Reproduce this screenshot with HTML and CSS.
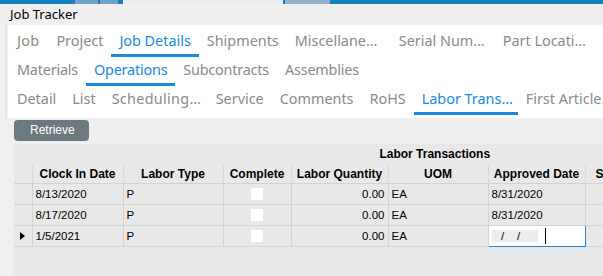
FILE: index.html
```html
<!DOCTYPE html>
<html lang="en">
<head>
    <meta charset="UTF-8">
    <title>Job Tracker</title>
    <link rel="stylesheet" href="styles.css">
</head>
<body>
    <!-- window chrome strip -->
    <div class="top-strip">
        <span class="chip chip-a"></span>
        <span class="chip chip-b"></span>
        <span class="chip chip-c"></span>
        <span class="chip chip-d"></span>
    </div>
    <div class="title-bar">Job Tracker</div>

    <div class="page">
        <div class="tab-panel">
            <div class="tab-row main-row">
                <span class="tab">Job</span>
                <span class="tab">Project</span>
                <span class="tab active">Job Details</span>
                <span class="tab">Shipments</span>
                <span class="tab trunc">Miscellane…</span>
                <span class="tab trunc">Serial Num…</span>
                <span class="tab trunc">Part Locati…</span>
            </div>
            <div class="tab-row tight">
                <span class="tab">Materials</span>
                <span class="tab active">Operations</span>
                <span class="tab">Subcontracts</span>
                <span class="tab">Assemblies</span>
            </div>
            <div class="tab-row">
                <span class="tab">Detail</span>
                <span class="tab">List</span>
                <span class="tab trunc spaced">Scheduling…</span>
                <span class="tab">Service</span>
                <span class="tab">Comments</span>
                <span class="tab">RoHS</span>
                <span class="tab trunc active">Labor Trans…</span>
                <span class="tab trunc">First Article…</span>
            </div>
        </div>

        <div class="lower">
            <div class="toolbar">
                <button class="retrieve-btn">Retrieve</button>
            </div>

            <div class="grid">
                <table class="labor-table">
                    <colgroup>
                        <col style="width:18px">
                        <col style="width:91px">
                        <col style="width:100px">
                        <col style="width:68px">
                        <col style="width:97px">
                        <col style="width:100px">
                        <col style="width:97px">
                        <col style="width:120px">
                        <col>
                    </colgroup>
                    <tr class="caption-row">
                        <td colspan="9">Labor Transactions</td>
                    </tr>
                    <tr class="head-row">
                        <th class="selector"></th>
                        <th>Clock In Date</th>
                        <th>Labor Type</th>
                        <th>Complete</th>
                        <th>Labor Quantity</th>
                        <th>UOM</th>
                        <th>Approved Date</th>
                        <th class="left">Status</th>
                        <th></th>
                    </tr>
                    <tr>
                        <td class="selector"></td>
                        <td>8/13/2020</td>
                        <td>P</td>
                        <td class="center"><span class="check"></span></td>
                        <td class="num">0.00</td>
                        <td>EA</td>
                        <td>8/31/2020</td>
                        <td></td>
                        <td></td>
                    </tr>
                    <tr>
                        <td class="selector"></td>
                        <td>8/17/2020</td>
                        <td>P</td>
                        <td class="center"><span class="check"></span></td>
                        <td class="num">0.00</td>
                        <td>EA</td>
                        <td>8/31/2020</td>
                        <td></td>
                        <td></td>
                    </tr>
                    <tr>
                        <td class="selector"><span class="row-arrow"></span></td>
                        <td>1/5/2021</td>
                        <td>P</td>
                        <td class="center"><span class="check"></span></td>
                        <td class="num">0.00</td>
                        <td>EA</td>
                        <td class="editing">
                            <span class="mask">&nbsp;&nbsp;&nbsp;/&nbsp;&nbsp;&nbsp;&nbsp;/</span><span class="caret"></span>
                        </td>
                        <td></td>
                        <td></td>
                    </tr>
                </table>
            </div>
        </div>
    </div>
</body>
</html>
```

FILE: styles.css
```css
body {
    margin: 0;
    overflow: hidden;
    font-family: "Liberation Sans", Arial, sans-serif;
    background-color: #f1f1f1;
    color: #000;
}

.top-strip {
    height: 4px;
    background-color: #1380c0;
    display: flex;
}
.chip {
    display: block;
    height: 4px;
}
.chip-a { margin-left: 75px; width: 23px; background-color: #6ea3c7; }
.chip-b { margin-left: 2px; width: 18px; background-color: #6ea3c7; }
.chip-c { margin-left: 5px; width: 160px; background-color: #e6eef3; }
.chip-d { margin-left: 2px; width: 45px; background-color: #8fb2c9; }

.title-bar {
    height: 21px;
    line-height: 21px;
    padding-left: 10px;
    background-color: #efefef;
    font-family: "Noto Sans", sans-serif;
    font-size: 13px;
}

.page {
    border-left: 2px solid #e6e6e6;
    margin-left: 5px;
    padding-left: 1px;
    background-color: #f1f1f1;
}

/* tab rows */
.tab-panel {
    background-color: #fff;
    height: 93px;
    padding-top: 3px;
    box-sizing: border-box;
}
.tab-row {
    display: flex;
    height: 29px;
    padding-left: 1px;
}
.tab {
    font-family: "Noto Sans", sans-serif;
    font-size: 14.4px;
    color: #8a8a8a;
    padding: 0 8px;
    height: 26px;
    line-height: 26px;
    white-space: nowrap;
    border-bottom: 3px solid transparent;
    flex-shrink: 0;
}
.main-row .tab:first-child {
    padding-right: 9px;
    letter-spacing: 0.3px;
}
.tight .tab {
    letter-spacing: -0.2px;
}
/* truncated labels get a fixed box */
.tab.trunc {
    width: 88px;
    overflow: hidden;
}
.tab.active {
    color: #1a8ae0;
    border-bottom-color: #1a8ae0;
}
.tab.spaced {
    letter-spacing: 0.3px;
}

/* lower grey area */
.lower {
    margin-left: -6px;
    padding-left: 6px;
    background-color: #efefef;
    height: 160px;
}
.toolbar {
    padding: 2px 0 3px 6px;
}
.retrieve-btn {
    font-family: "Liberation Sans", Arial, sans-serif;
    font-size: 12px;
    color: #fff;
    background-color: #6c7a80;
    border: none;
    border-radius: 4px;
    width: 75px;
    height: 21px;
    margin: 0;
    text-align: left;
    padding: 0 0 1px 16px;
}

.grid {
    margin-left: 6px;
    background-color: #e8e8e8;
    height: 140px;
    overflow: hidden;
}
.labor-table {
    border-collapse: collapse;
    table-layout: fixed;
    width: 842px;
    font-size: 11.5px;
}
.labor-table td,
.labor-table th {
    padding: 0 3px;
    white-space: nowrap;
    overflow: hidden;
}
.caption-row td {
    height: 20px;
    text-align: center;
    font-weight: bold;
    font-size: 12px;
    vertical-align: middle;
}
.head-row th {
    height: 19px;
    font-weight: bold;
    font-size: 12px;
    text-align: center;
    border-left: 1px solid #d9d9d9;
    border-bottom: 1px solid #d3d3d3;
}
.head-row th.selector {
    border-left: none;
}
.head-row th.left {
    text-align: left;
    padding-left: 10px;
}
.labor-table tr:not(.caption-row):not(.head-row) td {
    height: 20px;
    border: 1px solid #d3d3d3;
    vertical-align: middle;
}
.labor-table td.selector {
    border-left: none !important;
    padding: 0;
}
.num {
    text-align: right;
}
.center {
    text-align: center;
}
.check {
    display: inline-block;
    width: 12px;
    height: 12px;
    background-color: #fff;
    vertical-align: middle;
}
.row-arrow {
    display: block;
    width: 0;
    height: 0;
    margin-left: 6px;
    border-top: 4px solid transparent;
    border-bottom: 4px solid transparent;
    border-left: 5px solid #000;
}
.labor-table td.editing {
    background-color: #fff;
    border: 1px solid #1a85d6 !important;
    padding: 0 3px;
}
.mask {
    display: inline-block;
    width: 46px;
    height: 12px;
    line-height: 12px;
    background-color: #ececec;
    vertical-align: middle;
}
.caret {
    display: inline-block;
    width: 1px;
    height: 16px;
    margin-left: 7px;
    background-color: #000;
    vertical-align: middle;
}
```
